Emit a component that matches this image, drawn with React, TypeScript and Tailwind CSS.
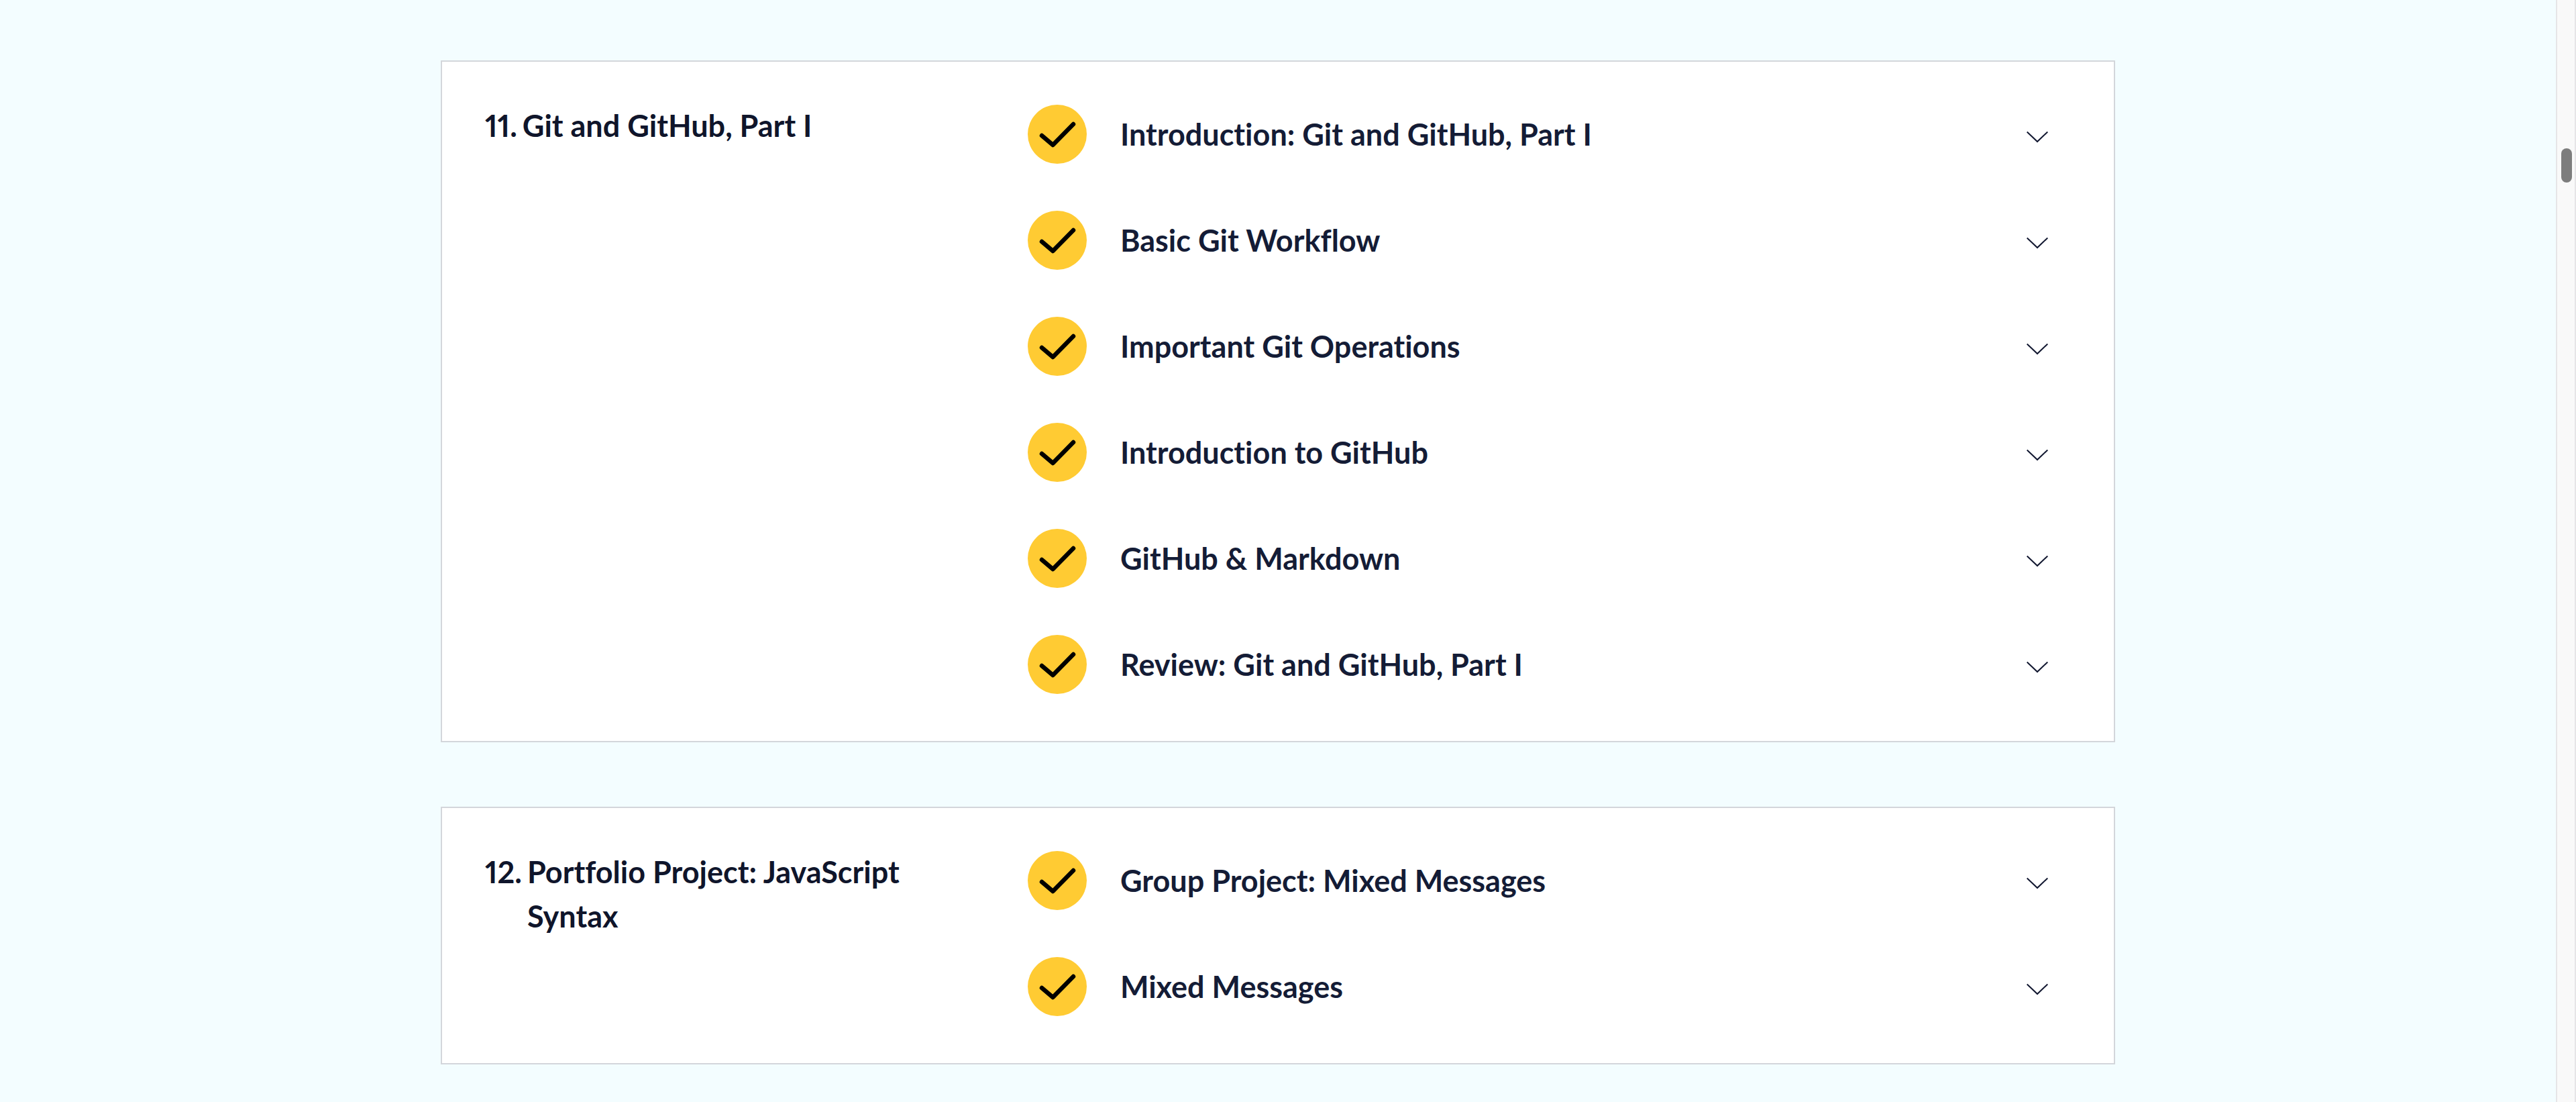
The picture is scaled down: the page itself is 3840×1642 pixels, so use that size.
const modules = [
  {
    number: 11,
    title: 'Git and GitHub, Part I',
    lessons: [
      'Introduction: Git and GitHub, Part I',
      'Basic Git Workflow',
      'Important Git Operations',
      'Introduction to GitHub',
      'GitHub & Markdown',
      'Review: Git and GitHub, Part I',
    ],
  },
  {
    number: 12,
    title: 'Portfolio Project: JavaScript Syntax',
    lessons: ['Group Project: Mixed Messages', 'Mixed Messages'],
  },
];

function CompletedBadge() {
  return (
    <svg className="size-22 shrink-0" viewBox="0 0 88 88" fill="none" role="img" aria-label="Completed">
      <circle cx="44" cy="44" r="44" fill="#ffcb33" />
      <path d="M21 46 37.5 60 68 29" stroke="#000" strokeWidth="6.5" strokeLinecap="round" strokeLinejoin="round" />
    </svg>
  );
}

function Chevron() {
  return (
    <svg className="size-12 shrink-0" viewBox="0 0 48 48" fill="none" aria-hidden="true">
      <path d="M8.7 20.5 24 35 39.3 20.5" stroke="#10162f" strokeWidth="2" />
    </svg>
  );
}

function Module({ number, title, lessons }: { number: number; title: string; lessons: string[] }) {
  return (
    <section className="flex border-2 border-[#d3d6db] bg-white pt-[62px] pr-[90px] pb-[70px] pl-16">
      <h2 className="flex w-[32%] shrink-0 gap-2 self-start pr-24 text-[45px] leading-[66px] font-bold text-[#0f152b] proportional-nums">
        <span>{number}.</span>
        <span>{title}</span>
      </h2>
      <ul className="ml-auto flex w-[65.4%] flex-col gap-[70px] pt-0.5">
        {lessons.map((lesson) => (
          <li key={lesson}>
            <button type="button" aria-expanded="false" className="flex w-full cursor-pointer items-center text-left">
              <CompletedBadge />
              <span className="ml-[50px] grow text-[45px] leading-[66px] font-bold text-[#141c36]">{lesson}</span>
              <Chevron />
            </button>
          </li>
        ))}
      </ul>
    </section>
  );
}

export default function App() {
  return (
    <div className="flex min-h-screen bg-[#f3fdff] font-['Lato',sans-serif] [font-variant-ligatures:none]">
      <main className="min-w-0 grow pt-[90px]">
        <div className="mx-auto flex max-w-[2496px] flex-col gap-24">
          {modules.map((m) => (
            <Module key={m.number} {...m} />
          ))}
        </div>
      </main>
      <div className="w-[30px] shrink-0 border-x-2 border-[#e6e5e7] bg-[#f9f9f9] pt-[221px] pl-1.5" aria-hidden="true">
        <div className="h-[51px] w-4 rounded-full bg-[#7d7d7d]" />
      </div>
    </div>
  );
}
